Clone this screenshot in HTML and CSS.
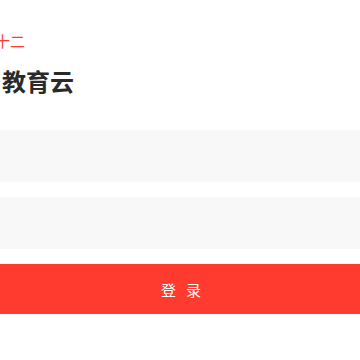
FILE: index.html
```html
<!DOCTYPE html>
<html lang="zh">
<head>
<meta charset="utf-8">
<link rel="stylesheet" href="styles.css">
</head>
<body>
<div class="page">
  <div class="sub">十二</div>
  <h1 class="title">教育云</h1>
  <div class="field"></div>
  <div class="field second"></div>
  <button class="btn">登录</button>
</div>
</body>
</html>
```
FILE: styles.css
```css
html, body {
  margin: 0;
  padding: 0;
  background: #fff;
  overflow: hidden;
}
.page {
  padding-top: 31px;
  font-family: "Noto Sans CJK SC", "Noto Sans", sans-serif;
}
.sub {
  margin-left: -5px;
  font-size: 15px;
  line-height: 20px;
  height: 20px;
  color: #ff3b30;
}
.title {
  margin: 14px 0 0 2px;
  font-size: 24px;
  line-height: 32px;
  font-weight: 700;
  color: #2a2a2a;
}
.field {
  margin-top: 33px;
  height: 52px;
  background: #f8f8f8;
}
.field.second {
  margin-top: 15px;
}
.btn {
  display: block;
  width: 100%;
  margin-top: 15px;
  height: 50px;
  border: none;
  background: #ff3b30;
  color: #fff;
  font-family: "Noto Sans CJK SC", sans-serif;
  font-size: 15px;
  letter-spacing: 10px;
  padding: 0 0 0 12px;
  box-shadow: 0 1px 2px rgba(0,0,0,0.2);
}
```
